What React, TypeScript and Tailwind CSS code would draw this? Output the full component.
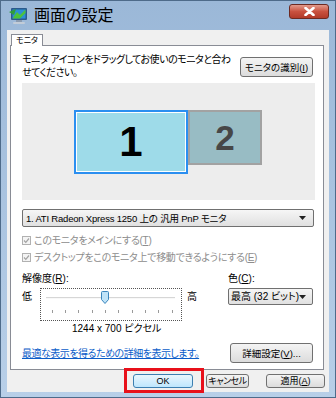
// App.tsx = Windows Vista "画面の設定" (display settings) dialog.
const jp = "font-['Liberation_Sans','Noto_Sans_CJK_JP',sans-serif] [font-feature-settings:'palt']";

const Btn = ({ children, w, def }: { children: React.ReactNode; w: string; def?: boolean }) => (
    <div
        className={`${w} h-[14px] flex items-center justify-center whitespace-nowrap rounded-[3px] border text-[9px] leading-none text-black ${
            def
                ? "border-[#3c7fb1] bg-linear-to-b from-[#eaf6fd] to-[#bee6fd]"
                : "border-[#707070] bg-linear-to-b from-[#f4f4f4] to-[#dcdcdc]"
        }`}
    >
        {children}
    </div>
);

const Check = () => (
    <svg width="9" height="9" viewBox="0 0 9 9" className="shrink-0">
        <rect x="0.5" y="0.5" width="8" height="8" fill="#f4f4f4" stroke="#b1b1b1" />
        <path d="M2 4.5 L3.8 6.3 L7 2.5" fill="none" stroke="#a3a3a3" strokeWidth="1.2" />
    </svg>
);

const Arrow = () => (
    <svg width="7" height="4" viewBox="0 0 7 4">
        <path d="M0 0 H7 L3.5 4 Z" fill="#222" />
    </svg>
);

export default function App() {
    const ticks = [52, 65, 78, 92, 105, 118, 132, 145, 158, 172];

    return (
        <div className={`${jp} relative w-[336px] h-[398px] flex flex-col border border-[#4e6b8a] bg-linear-to-b from-[#9bb8d8] to-[#b8cfe8] overflow-hidden`}>
            {/* title bar */}
            <div className="h-[29px] flex items-center pl-[7px] pr-[6px]">
                <svg width="21" height="20" viewBox="0 0 21 20">
                    <rect x="3" y="2" width="16" height="12" rx="1" fill="#2c5a8c" />
                    <rect x="4.5" y="3.5" width="13" height="9" fill="#2d8fd6" />
                    <path d="M4.5 12.5 L9 6 L12 9 L17.5 3.5 V7 L12 12.5 Z" fill="#4cc23a" />
                    <path d="M1 6 L8 3 L6 9 Z" fill="#2f9e3a" />
                    <rect x="8" y="14" width="6" height="2" fill="#8a9bb0" />
                    <rect x="5" y="16" width="12" height="2" rx="1" fill="#c2ccd8" />
                </svg>
                <span className="ml-[5px] text-[16px] leading-none text-black">画面の設定</span>
                <div className="ml-auto mt-[-8px] w-[40px] h-[15px] rounded-[3px] border border-[#6d2a22] bg-linear-to-b from-[#e19a8c] via-[#c9513f] to-[#b13a29] flex items-center justify-center">
                    <svg width="11" height="9" viewBox="0 0 11 9">
                        <path d="M1.5 1 L9.5 8 M9.5 1 L1.5 8" stroke="#ffffff" strokeWidth="2.6" strokeLinecap="round" />
                    </svg>
                </div>
            </div>

            {/* client */}
            <div className="mx-[6px] h-[362px] bg-[#f0f0f0] pl-[3px] pt-[4px] flex flex-col">
                <div className="ml-[1px] w-[32px] h-[12px] bg-white border border-b-0 border-[#898c95] flex items-center justify-center text-[8px] leading-none relative z-10 mb-[-1px]">
                    モニタ
                </div>
                <div className="w-[314px] h-[325px] bg-white border border-[#898c95] pl-[11px] pr-[9px] pt-[7px] flex flex-col text-[10px] leading-[13px] text-black">
                    <div className="flex items-start">
                        <div className="flex flex-col whitespace-nowrap tracking-[-0.5px]">
                            <span>モニタ アイコンをドラッグしてお使いのモニタと合わ</span>
                            <span>せてください。</span>
                        </div>
                        <div className="ml-auto mt-[4px] mr-[1px]">
                            <div className="w-[73px] h-[20px] flex items-center justify-center whitespace-nowrap rounded-[3px] border border-[#707070] bg-linear-to-b from-[#f4f4f4] to-[#dcdcdc] text-[9.5px]">
                                モニタの識別(<u>I</u>)
                            </div>
                        </div>
                    </div>

                    <div className="mt-[4px] w-[293px] h-[117px] bg-[#ededed] pl-[52px] pt-[27px] flex items-start">
                        <div className="w-[114px] h-[64px] border-2 border-[#2b8ff0] p-[1px] bg-white">
                            <div className="w-full h-full bg-[#9edbe9] flex items-center justify-center font-['Liberation_Sans',sans-serif] font-bold text-[42px] leading-none text-black">
                                1
                            </div>
                        </div>
                        <div className="w-[74px] h-[55px] border-2 border-[#a2a2a2] bg-[#98bcc4] flex items-center justify-center font-['Liberation_Sans',sans-serif] font-bold text-[35px] leading-none text-[#474747]">
                            2
                        </div>
                    </div>

                    <div className="mt-[9px] w-[292px] h-[18px] rounded-[2px] border border-[#707070] bg-linear-to-b from-[#f6f6f6] to-[#e0e0e0] flex items-center pl-[3px] pr-[7px] text-[9.5px] tracking-[-0.2px] whitespace-nowrap">
                        <span>1. ATI Radeon Xpress 1250 上の 汎用 PnP モニタ</span>
                        <span className="ml-auto flex"><Arrow /></span>
                    </div>

                    <div className="mt-[7px] flex items-center gap-[3px] text-[#8d8d8d] whitespace-nowrap tracking-[-0.3px]">
                        <Check />
                        <span>このモニタをメインにする(<u>T</u>)</span>
                    </div>
                    <div className="mt-[4px] flex items-center gap-[3px] text-[#8d8d8d] whitespace-nowrap tracking-[-0.3px]">
                        <Check />
                        <span>デスクトップをこのモニタ上で移動できるようにする(<u>E</u>)</span>
                    </div>

                    <div className="mt-[8px] flex">
                        <div className="flex flex-col">
                            <span>解像度(<u>R</u>):</span>
                            <div className="mt-[3px] flex items-start">
                                <span className="w-[18px] mt-[2px]">低</span>
                                <div className="w-[142px] h-[33px] border border-dotted border-[#555] flex flex-col">
                                    <div className="relative h-[16px]">
                                        <div className="absolute left-[5px] right-[6px] top-[8px] h-[2px] bg-[#d6d6d6] border-b border-[#f8f8f8]" />
                                        <svg className="absolute left-[60px] top-[2px]" width="8" height="13" viewBox="0 0 8 13">
                                            <path d="M0.5 1.5 Q0.5 0.5 1.5 0.5 H6.5 Q7.5 0.5 7.5 1.5 V8.5 L4 12.5 L0.5 8.5 Z" fill="#bfe3f8" stroke="#3b86bd" />
                                        </svg>
                                    </div>
                                    <div className="relative h-[14px]">
                                        {ticks.map((x) => (
                                            <div key={x} className="absolute top-[5px] w-[1px] h-[3px] bg-[#9a9a9a]" style={{ left: x - 41 }} />
                                        ))}
                                    </div>
                                </div>
                                <span className="ml-[5px] mt-[2px]">高</span>
                            </div>
                            <span className="mt-[1px] ml-[50px] whitespace-nowrap">1244 x 700 ピクセル</span>
                        </div>
                        <div className="ml-[31px] flex flex-col">
                            <span>色(<u>C</u>):</span>
                            <div className="mt-[3px] w-[85px] h-[17px] rounded-[2px] border border-[#707070] bg-linear-to-b from-[#f6f6f6] to-[#e0e0e0] flex items-center pl-[2px] pr-[6px] whitespace-nowrap">
                                <span>最高 (32 ビット)</span>
                                <span className="ml-auto flex"><Arrow /></span>
                            </div>
                        </div>
                    </div>

                    <div className="mt-[8px] flex items-center">
                        <span className="text-[#0b5dc9] underline whitespace-nowrap tracking-[-0.5px]">最適な表示を得るための詳細を表示します。</span>
                        <div className="ml-auto mr-[1px] w-[83px] h-[20px] flex items-center justify-center whitespace-nowrap rounded-[3px] border border-[#707070] bg-linear-to-b from-[#f4f4f4] to-[#dcdcdc] text-[9.5px]">
                            詳細設定(<u>V</u>)...
                        </div>
                    </div>
                </div>

                <div className="mt-[4px] flex items-center pl-[123px]">
                    <Btn w="w-[60px]" def>OK</Btn>
                    <div className="ml-[13px]"><Btn w="w-[43px]"><span className="tracking-[-0.5px]">キャンセル</span></Btn></div>
                    <div className="ml-[17px]"><Btn w="w-[59px]">適用(<u>A</u>)</Btn></div>
                </div>
            </div>

            {/* red highlight around OK */}
            <div className="absolute left-[123px] top-[367px] w-[80px] h-[25px] border-[3px] border-[#e8101a]" />
        </div>
    );
}
